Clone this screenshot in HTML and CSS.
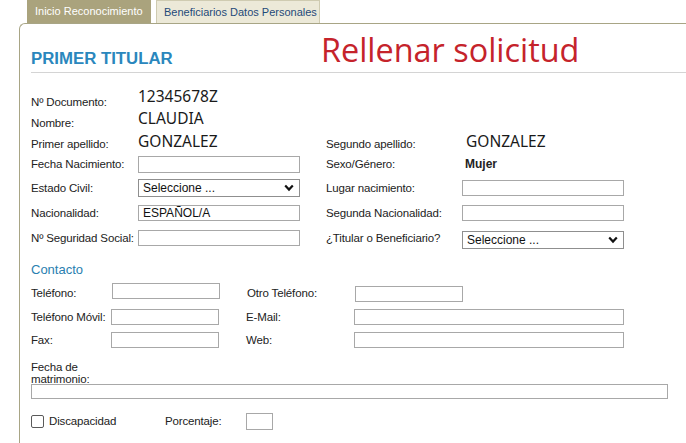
FILE: index.html
```html
<!DOCTYPE html>
<html lang="es">
<head>
<meta charset="utf-8">
<title>Rellenar solicitud</title>
<link rel="stylesheet" href="styles.css">
</head>
<body>
<div class="tabs">
  <div class="tab tab-active">Inicio Reconocimiento</div>
  <div class="tab tab-idle">Beneficiarios Datos Personales</div>
</div>
<div class="panel">
  <div class="header">
    <h1 class="title">PRIMER TITULAR</h1>
    <div class="note">Rellenar solicitud</div>
  </div>

  <div class="form">
    <div class="row text-row r1">
      <span class="lbl c1">Nº Documento:</span>
      <span class="val">12345678Z</span>
    </div>
    <div class="row text-row r2">
      <span class="lbl c1">Nombre:</span>
      <span class="val">CLAUDIA</span>
    </div>
    <div class="row text-row r3">
      <span class="lbl c1">Primer apellido:</span>
      <span class="val c2">GONZALEZ</span>
      <span class="lbl c3t">Segundo apellido:</span>
      <span class="val">GONZALEZ</span>
    </div>
    <div class="row field-row r4">
      <span class="lbl c1">Fecha Nacimiento:</span>
      <input class="inp w161" type="text">
      <span class="lbl c3 gap">Sexo/Género:</span>
      <span class="bold">Mujer</span>
    </div>
    <div class="row field-row r5">
      <span class="lbl c1">Estado Civil:</span>
      <div class="sel w161"><span>Seleccione ...</span><svg class="chev" viewBox="0 0 10 8" width="10" height="8"><path d="M1.2 1.6 L5 5.6 L8.8 1.6" fill="none" stroke="#111" stroke-width="2.2"/></svg></div>
      <span class="lbl c3 gap">Lugar nacimiento:</span>
      <input class="inp w161" type="text">
    </div>
    <div class="row field-row r6">
      <span class="lbl c1">Nacionalidad:</span>
      <input class="inp w161" type="text" value="ESPAÑOL/A">
      <span class="lbl c3 gap">Segunda Nacionalidad:</span>
      <input class="inp w161" type="text">
    </div>
    <div class="row field-row r7">
      <span class="lbl c1">Nº Seguridad Social:</span>
      <input class="inp w161" type="text">
      <span class="lbl c3 gap">¿Titular o Beneficiario?</span>
      <div class="sel w161 rsel"><span>Seleccione ...</span><svg class="chev" viewBox="0 0 10 8" width="10" height="8"><path d="M1.2 1.6 L5 5.6 L8.8 1.6" fill="none" stroke="#111" stroke-width="2.2"/></svg></div>
    </div>

    <div class="subtitle">Contacto</div>

    <div class="row crow k1">
      <span class="lbl k-c1">Teléfono:</span>
      <input class="inp w107 tel" type="text">
      <span class="lbl k-c3">Otro Teléfono:</span>
      <input class="inp w107 otro" type="text">
    </div>
    <div class="row crow k2">
      <span class="lbl k-c1">Teléfono Móvil:</span>
      <input class="inp w107" type="text">
      <span class="lbl k-c3">E-Mail:</span>
      <input class="inp w269" type="text">
    </div>
    <div class="row crow k3">
      <span class="lbl k-c1">Fax:</span>
      <input class="inp w107" type="text">
      <span class="lbl k-c3">Web:</span>
      <input class="inp w269" type="text">
    </div>

    <div class="marriage">
      <div class="lbl mlbl">Fecha de<br>matrimonio:</div>
      <input class="inp wide" type="text">
    </div>

    <div class="row drow">
      <span class="check"></span>
      <span class="lbl dlbl">Discapacidad</span>
      <span class="lbl plbl">Porcentaje:</span>
      <input class="inp pct" type="text">
    </div>
  </div>
</div>
</body>
</html>
```
FILE: styles.css
```css
html, body {
  margin: 0;
  padding: 0;
  background: #ffffff;
  width: 686px;
  height: 443px;
  overflow: hidden;
  font-family: "Liberation Sans", Arial, sans-serif;
}

.tabs {
  display: flex;
  padding-left: 27px;
  height: 23px;
  gap: 5px;
}

.tab {
  font-size: 11px;
  line-height: 23px;
  height: 23px;
  box-sizing: border-box;
  padding: 0 0 0 8px;
  white-space: nowrap;
}

.tab-active {
  width: 124px;
  background: #aaa37d;
  color: #ffffff;
}

.tab-idle {
  width: 164px;
  background: #ece9d8;
  border: 1px solid #cfcbb1;
  border-bottom: none;
  color: #1f4a78;
  line-height: 22px;
  padding-left: 7px;
}

.panel {
  margin-left: 19px;
  border-top: 1px solid #a8a585;
  border-left: 1px solid #a8a585;
  border-top-left-radius: 6px;
  height: 430px;
  padding-left: 11px;
}

.header {
  display: flex;
  align-items: flex-start;
  height: 48px;
  border-bottom: 1px solid #d4d4d4;
}

.title {
  margin: 0;
  padding-top: 25px;
  font-size: 16.8px;
  line-height: 19px;
  font-weight: bold;
  color: #2a87bd;
  width: 290px;
  white-space: nowrap;
}

.note {
  padding-top: 5px;
  font-family: "Open Sans", "Noto Sans", sans-serif;
  font-size: 32.4px;
  line-height: 40px;
  color: #c5232b;
  white-space: nowrap;
}

.form {
  padding-top: 14px;
}

.row {
  display: flex;
}

.lbl {
  font-size: 11.5px;
  line-height: 14px;
  color: #222222;
  white-space: nowrap;
  letter-spacing: -0.15px;
}

.val {
  font-family: "Noto Sans", "Open Sans", sans-serif;
  font-size: 15.5px;
  line-height: 18px;
  color: #1a1a1a;
}

.text-row {
  align-items: flex-start;
  height: 21px;
}

.text-row .lbl {
  padding-top: 8px;
}

.c1 {
  width: 107px;
}

.c2 {
  width: 188px;
}

.c3 {
  width: 136px;
}

.c3t {
  width: 140px;
}

.r2 .val {
  padding-top: 1px;
}

.r3 {
  height: 23px;
}

.r3 .val {
  padding-top: 3px;
}

.field-row {
  align-items: center;
}

.r4 { height: 24px; }
.r5 { height: 24px; }
.r6 { height: 25px; }
.r7 { height: 26px; }

.gap {
  margin-left: 26px;
}

.inp {
  box-sizing: border-box;
  height: 16px;
  border: 1px solid #a8a8a8;
  background: #ffffff;
  padding: 0 4px;
  margin: 0;
  font-family: "Liberation Sans", Arial, sans-serif;
  font-size: 12px;
  color: #111111;
  outline: none;
}

.w161 { width: 162px; }
.w107 { width: 108px; }
.w269 { width: 270px; }

.r4 .inp { height: 17px; }

.sel {
  position: relative;
  box-sizing: border-box;
  height: 18px;
  border: 1px solid #8f8f8f;
  background: #ffffff;
  font-size: 12px;
  line-height: 16px;
  color: #111111;
  padding-left: 4px;
}

.rsel {
  margin-top: 3px;
}

.chev {
  position: absolute;
  right: 5px;
  top: 4px;
}

.bold {
  font-size: 12px;
  font-weight: bold;
  color: #222222;
  margin-left: 3px;
}

.subtitle {
  margin-top: 11px;
  font-size: 13px;
  line-height: 16px;
  color: #2a80b0;
}

.crow {
  align-items: center;
}

.k1 { height: 25px; margin-top: 2px; }
.k2 { height: 23px; }
.k3 { height: 24px; }

.k-c1 {
  width: 80px;
}

.k-c3 {
  width: 108px;
  margin-left: 27px;
}

.tel {
  margin-left: 1px;
  margin-top: -3px;
}

.otro {
  margin-top: 2px;
}

.marriage {
  padding-top: 9px;
}

.mlbl {
  line-height: 12px;
  height: 24px;
}

.wide {
  width: 637px;
  height: 15px;
  margin-top: -1px;
  display: block;
}

.drow {
  align-items: center;
  height: 20px;
  margin-top: 12px;
}

.check {
  box-sizing: border-box;
  width: 13px;
  height: 13px;
  border: 1px solid #5a5a5a;
  border-radius: 2px;
  background: #ffffff;
}

.dlbl {
  margin-left: 5px;
  width: 116px;
}

.plbl {
  width: 81px;
}

.pct {
  width: 27px;
  height: 17px;
}
```
